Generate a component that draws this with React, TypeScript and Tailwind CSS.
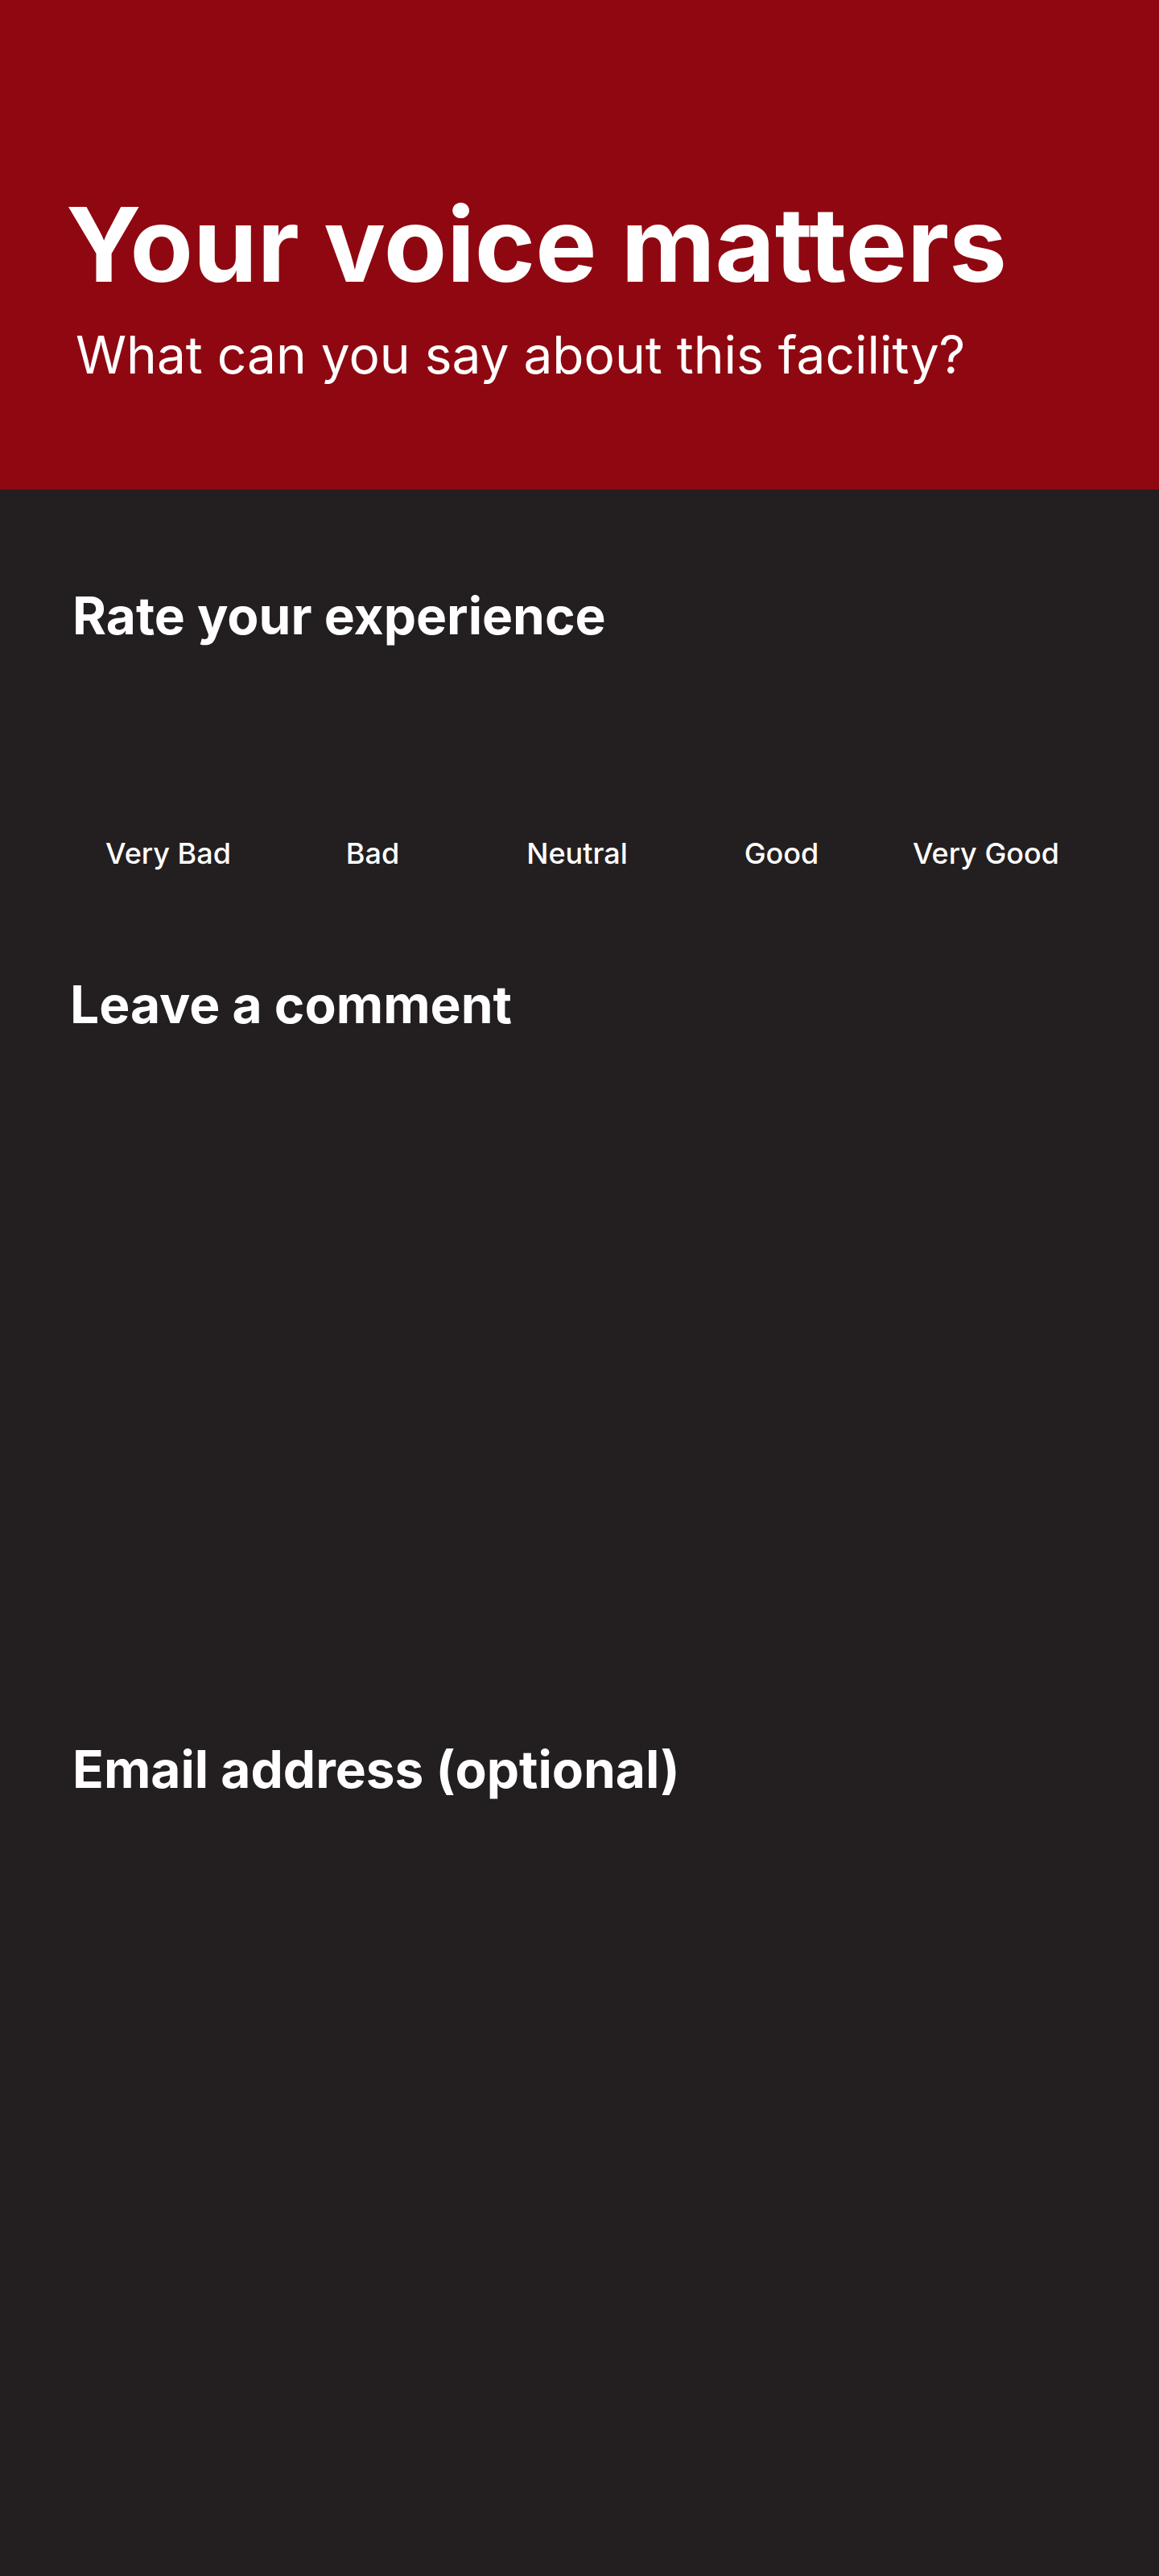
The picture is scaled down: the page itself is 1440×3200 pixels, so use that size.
import React from "react";

const labels = ["Very Bad", "Bad", "Neutral", "Good", "Very Good"];

export default function App() {
  return (
    <div className="min-h-[3200px] bg-[#231f20] font-['Inter',sans-serif] text-white">
      <header className="h-[608px] bg-[#8f0811] pl-[82px] pt-[240px]">
        <h1 className="text-[128px] font-bold leading-none">Your voice matters</h1>
        <p className="ml-[12px] mt-[41px] text-[64px] font-normal leading-none">
          What can you say about this facility?
        </p>
      </header>
      <main className="pl-[90px] pt-[125px] pb-[100px]">
        <section>
          <h2 className="text-[64px] font-bold leading-none">Rate your experience</h2>
          <div className="-ml-[8px] mt-[245px] grid grid-cols-[repeat(5,254px)]">
            {labels.map((l) => (
              <div key={l} className="text-center text-[36px] font-medium leading-none">
                {l}
              </div>
            ))}
          </div>
        </section>
        <section className="mt-[138px]">
          <h2 className="-ml-[3px] text-[64px] font-bold leading-none">Leave a comment</h2>
          <div className="h-[886px]" />
        </section>
        <section>
          <h2 className="text-[64px] font-bold leading-none">Email address (optional)</h2>
        </section>
      </main>
    </div>
  );
}
